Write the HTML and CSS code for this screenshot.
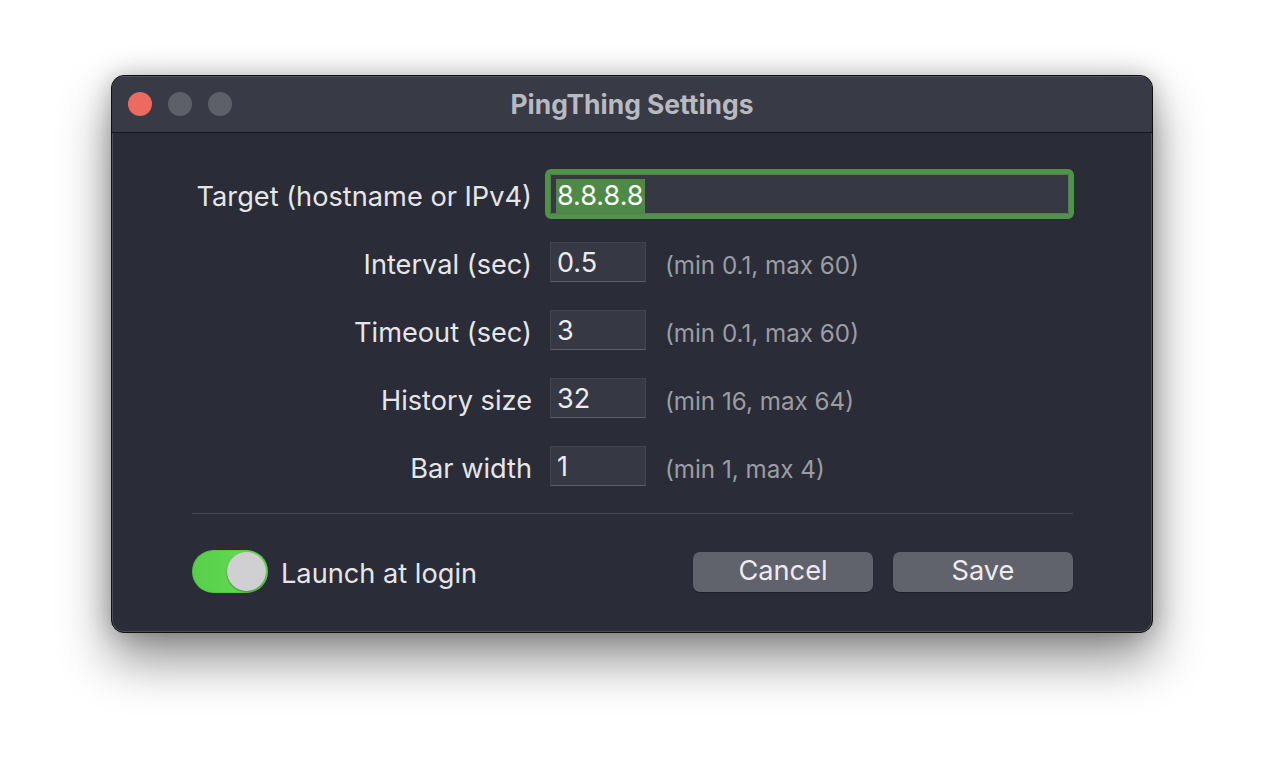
FILE: index.html
```html
<!DOCTYPE html>
<html>
<head>
<meta charset="utf-8">
<link rel="stylesheet" href="styles.css">
</head>
<body>
<div class="page">
  <div class="window">
    <div class="titlebar">
      <div class="lights">
        <span class="light red"></span>
        <span class="light gray"></span>
        <span class="light gray"></span>
      </div>
      <div class="title">PingThing Settings</div>
    </div>
    <div class="content">
      <div class="form">
        <label class="label">Target (hostname or IPv4)</label>
        <div class="field wide"><span class="sel">8.8.8.8</span></div>

        <label class="label">Interval (sec)</label>
        <div class="inline"><div class="field small">0.5</div><span class="hint">(min 0.1, max 60)</span></div>

        <label class="label">Timeout (sec)</label>
        <div class="inline"><div class="field small">3</div><span class="hint">(min 0.1, max 60)</span></div>

        <label class="label">History size</label>
        <div class="inline"><div class="field small">32</div><span class="hint">(min 16, max 64)</span></div>

        <label class="label">Bar width</label>
        <div class="inline"><div class="field small">1</div><span class="hint">(min 1, max 4)</span></div>
      </div>
      <div class="sep"></div>
      <div class="footer">
        <div class="launch">
          <div class="toggle"><span class="knob"></span></div>
          <span class="launch-text">Launch at login</span>
        </div>
        <div class="buttons">
          <button class="btn">Cancel</button>
          <button class="btn">Save</button>
        </div>
      </div>
    </div>
  </div>
</div>
</body>
</html>
```

FILE: styles.css
```css
* { box-sizing: border-box; }
html, body {
  margin: 0;
  padding: 0;
  background: #ffffff;
  width: 1264px;
  height: 780px;
  overflow: hidden;
}
body {
  font-family: Inter, "Noto Sans", sans-serif;
}
.page {
  display: flex;
  justify-content: center;
  padding-top: 75px;
}
.window {
  width: 1042px;
  height: 558px;
  border-radius: 13px;
  border: 1px solid #101014;
  box-shadow: inset 0 0 0 1px rgba(255,255,255,0.16), 0 26px 52px rgba(0,0,0,0.45), 0 0 24px rgba(0,0,0,0.22);
  background: #2a2c37;
  overflow: hidden;
  display: flex;
  flex-direction: column;
}
.titlebar {
  height: 57px;
  flex: none;
  background: #383a45;
  border-bottom: 1px solid #15161b;
  display: flex;
  align-items: center;
  position: relative;
  box-shadow: inset 0 1px 0 rgba(255,255,255,0.14);
}
.lights {
  display: flex;
  gap: 16px;
  padding-left: 16px;
}
.light {
  width: 24px;
  height: 24px;
  border-radius: 50%;
  display: block;
}
.light.red { background: #ed6a5e; }
.light.gray { background: #5e6069; }
.title {
  position: absolute;
  left: 0;
  right: 0;
  top: 0;
  bottom: 0;
  display: flex;
  align-items: center;
  justify-content: center;
  color: #b9bac0;
  font-weight: 700;
  font-size: 26.4px;
  pointer-events: none;
}
.content {
  flex: 1;
  padding: 41px 79px 0 80px;
  display: flex;
  flex-direction: column;
}
.form {
  display: grid;
  grid-template-columns: 338px 1fr;
  column-gap: 20px;
  row-gap: 28px;
  align-items: center;
}
.label {
  text-align: right;
  color: #e6e6e9;
  font-size: 27.2px;
  line-height: 40px;
  padding-top: 5px;
  margin-top: -5px;
  position: relative;
  top: 3px;
  margin-right: -2px;
}
.field {
  height: 40px;
  background: #363844;
  color: #ececef;
  font-size: 27px;
  display: flex;
  align-items: center;
  padding-left: 6px;
  border: 1px solid #41434d;
  border-bottom-color: #5b5d65;
}
.field.wide {
  width: 519px;
  height: 40px;
  border: 1px solid #5a7756;
  outline: 5px solid #4e9446;
  border-radius: 1px;
  outline-offset: 0;
  padding-left: 5px;
  align-items: flex-end;
}
.sel {
  background: #4e8a46;
  color: #ffffff;
  padding: 0 1px;
  height: 34px;
  line-height: 34px;
}
.field.small {
  width: 96px;
}
.inline {
  display: flex;
  align-items: center;
  gap: 19px;
}
.hint {
  color: #9c9da3;
  font-size: 24.2px;
  position: relative;
  top: 3px;
}
.sep {
  height: 1px;
  background: #454750;
  margin-top: 27px;
}
.footer {
  display: flex;
  align-items: center;
  justify-content: space-between;
  padding-top: 36px;
}
.launch {
  display: flex;
  align-items: center;
  gap: 13px;
}
.toggle {
  width: 76px;
  height: 43px;
  border-radius: 22px;
  background: linear-gradient(90deg, #58cf4a, #66dd54);
  position: relative;
  box-shadow: inset 0 0 0 1px rgba(0,0,0,0.08);
}
.knob {
  position: absolute;
  right: 2px;
  top: 2px;
  width: 39px;
  height: 39px;
  border-radius: 50%;
  background: #d0d0d3;
  box-shadow: 0 1px 2px rgba(0,0,0,0.35);
}
.launch-text {
  color: #e6e6e9;
  font-size: 27.2px;
  position: relative;
  top: 2px;
}
.buttons {
  display: flex;
  gap: 20px;
}
.btn {
  width: 180px;
  height: 40px;
  border: none;
  border-radius: 7px;
  background: #60626c;
  color: #ececee;
  font-family: Inter, "Noto Sans", sans-serif;
  font-size: 27.2px;
  padding: 0 0 2px 0;
  box-shadow: 0 1px 1px rgba(0,0,0,0.3);
}
```
